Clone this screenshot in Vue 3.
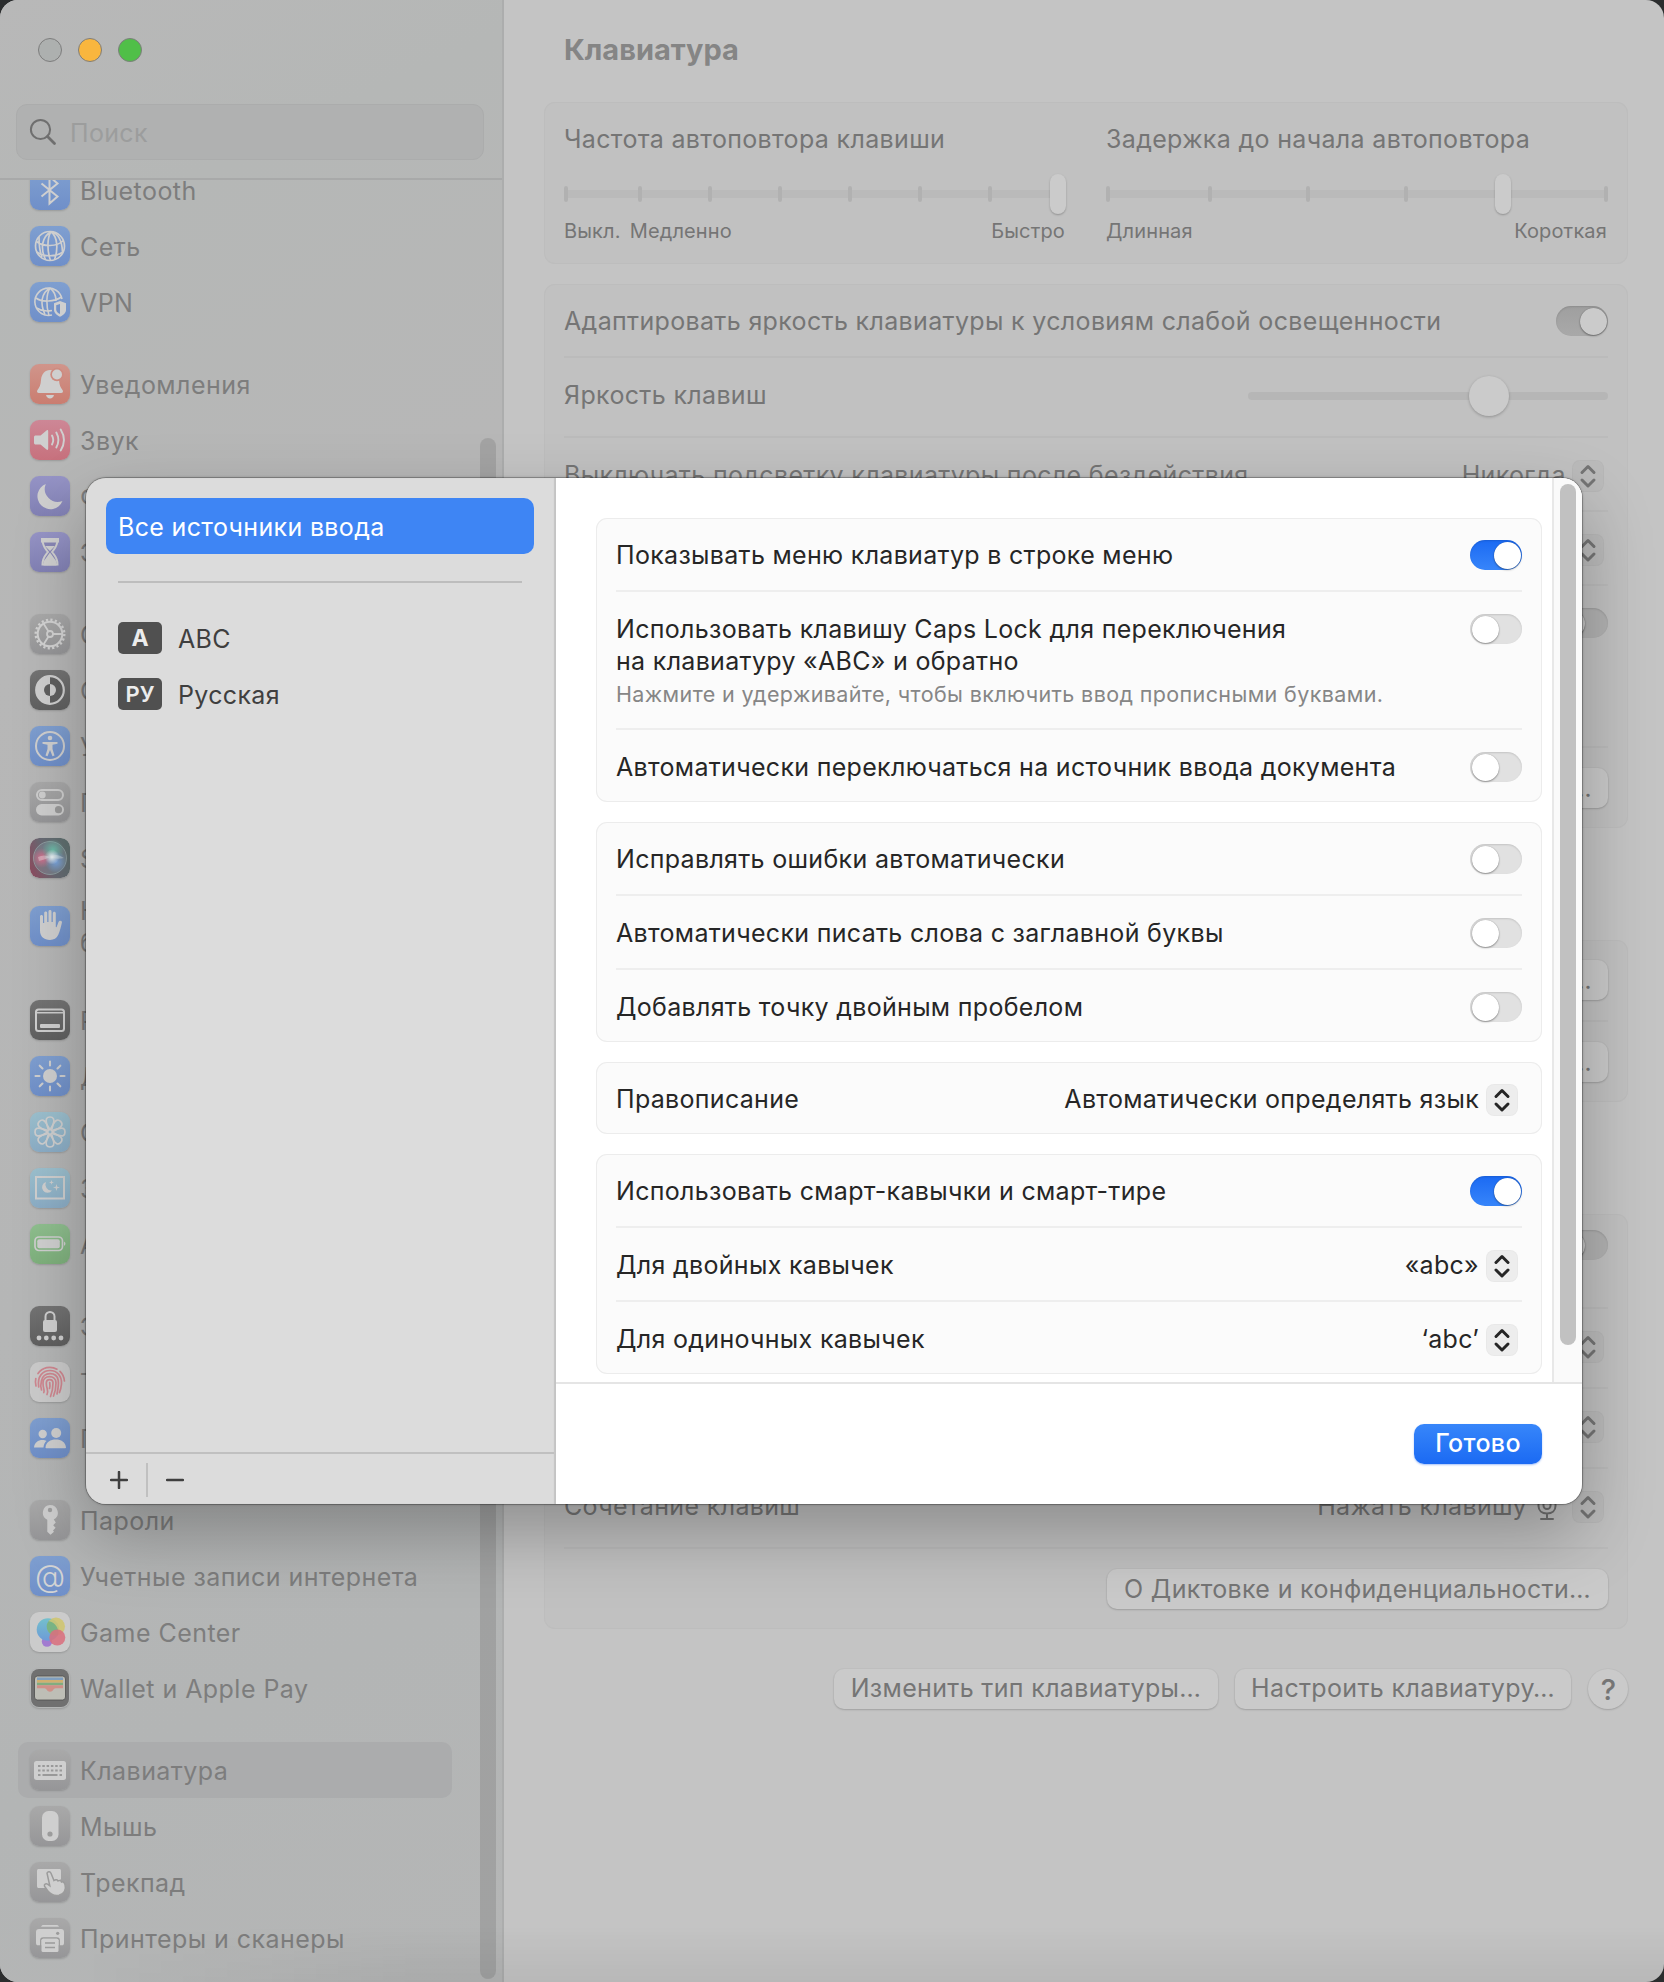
<script setup>
const F = '#cfcfcf'

const glyphs = {
  bluetooth: `<path d="M11.5 13.5L27.5 26.5L19.5 33.5V6.5L27.5 13.5L11.5 26.5" fill="none" stroke="${F}" stroke-width="2"/>`,
  globe: `<g fill="none" stroke="${F}" stroke-width="1.7"><circle cx="20" cy="20" r="14.5"/><path d="M21 5.5C12 11 10 22 15.5 33.5M21 5.5C17 12 17 25 20.500 34.500M21 5.500C28 11 28 24 24.500 33.500M22 5.500C28 8 32 14 32.500 26M6.500 15.500C13 21 27 21 33.500 14.500M6.500 26C14 31 26 31 33 26M9 11C9 18 9 24 12 31"/></g>`,
  vpn: `<g fill="none" stroke="${F}" stroke-width="1.6"><path d="M32 17A13.700 13.700 0 1 0 22 33"/><path d="M20 6C11 11 10 22 15 32.500M20 6C16 12 16 24 19 33.500M20 6C24 9 26 14 26 19M6 16C12 20.500 24 20 31.500 15M6.500 26C12 29.500 17 29.500 22 28.500"/></g><path d="M30 19l6 2.200v6.500c0 3.500-3 5.500-6 7c-3-1.500-6-3.500-6-7v-6.500z" fill="${F}"/><path d="M30 22v10c-2-1-3.800-2.200-3.800-4.500v-4.200z" fill="#7392c8"/>`,
  bell: `<path d="M20 6c-5 0-8.500 4-9 10c-.3 5-1.500 7.500-3.500 10c-1 1.500-.5 3 1.500 3h22c2 0 2.500-1.500 1.500-3c-2-2.500-3.200-5-3.500-10c-.5-6-4-10-9-10z" fill="${F}"/><path d="M16 31h8c-.5 2.200-2 3.500-4 3.500s-3.500-1.300-4-3.500z" fill="${F}"/><circle cx="27" cy="10.500" r="6.700" fill="#cd8b80"/><circle cx="27" cy="10.500" r="5" fill="${F}"/>`,
  sound: `<path d="M4 17.500c0-1.500.5-2 2-2h4.500l6-5c1-.8 1.700-.5 1.700.7v17.600c0 1.200-.7 1.500-1.700.7l-6-5H6c-1.500 0-2-.5-2-2z" fill="${F}"/><path d="M22 15.500q2.500 4.500 0 9M26.300 12.500q4.200 7.500 0 15M30.700 9.500q6.500 10.500 0 21" fill="none" stroke="${F}" stroke-width="1.900" stroke-linecap="round"/>`,
  moon: `<path d="M15.800 8A13 13 0 0 0 32.500 25A13 13 0 1 1 15.800 8z" fill="${F}"/>`,
  hourglass: `<path d="M12.500 7.500h15c0 7-3 9-5.500 12.500c2.500 3.500 5.500 5.500 5.500 12.500h-15c0-7 3-9 5.500-12.500c-2.500-3.500-5.500-5.500-5.500-12.500z" fill="#8886b5" stroke="${F}" stroke-width="2"/><path d="M11 6h18v4.500H11zM15 14h10l-5 5zM20 20.500l6.500 9v4h-13v-4z" fill="${F}"/>`,
  gear: `<g fill="none" stroke="#d2d2d2"><circle cx="20" cy="20" r="14.300" stroke-width="2.400" stroke-dasharray="2.200 2.290"/><circle cx="20" cy="20" r="12.300" stroke-width="2"/><circle cx="20" cy="20" r="3" stroke-width="1.800"/><path d="M23 20h9.500M18.500 17.400L13.500 9.500M18.500 22.600L13.500 30.500" stroke-width="1.800"/></g>`,
  contrast: `<circle cx="20" cy="20" r="13.800" fill="#5f5f5f" stroke="${F}" stroke-width="2.200"/><path d="M20 6a14 14 0 0 0 0 28z" fill="${F}"/><circle cx="20" cy="20" r="6" fill="${F}"/><path d="M20 14a6 6 0 0 0 0 12z" fill="#5f5f5f"/>`,
  access: `<circle cx="20" cy="20" r="14" fill="none" stroke="${F}" stroke-width="2"/><circle cx="20" cy="12" r="2.300" fill="${F}"/><path d="M12.500 16h15v1.800l-5 1V23l2 6.500-2 .7L20 24l-2.500 6.200-2-.7 2-6.500v-4.200l-5-1z" fill="${F}"/>`,
  switches: `<rect x="7" y="8" width="26" height="10" rx="5" fill="none" stroke="#cecece" stroke-width="2"/><circle cx="12.300" cy="13" r="3.400" fill="#cecece"/><rect x="6" y="22" width="28" height="11.500" rx="5.700" fill="#cecece"/><circle cx="28.500" cy="27.700" r="3.600" fill="#999"/>`,
  siri: `<defs><linearGradient id="sb" x1="0" y1=".8" x2="1" y2=".4"><stop offset="0" stop-color="#8b4d60"/><stop offset=".5" stop-color="#686a74"/><stop offset="1" stop-color="#5f6f6f"/></linearGradient><radialGradient id="sp"><stop offset="0" stop-color="#d8708e"/><stop offset="1" stop-color="#d8708e" stop-opacity="0"/></radialGradient><radialGradient id="st"><stop offset="0" stop-color="#6cbca8"/><stop offset="1" stop-color="#6cbca8" stop-opacity="0"/></radialGradient><radialGradient id="su"><stop offset="0" stop-color="#7aa4dc"/><stop offset="1" stop-color="#7aa4dc" stop-opacity="0"/></radialGradient><radialGradient id="sw"><stop offset="0" stop-color="#eef4f6"/><stop offset="1" stop-color="#eef4f6" stop-opacity="0"/></radialGradient></defs><rect width="40" height="40" rx="9" fill="url(#sb)"/><circle cx="20" cy="20" r="16.500" fill="#8694a0" stroke="#93a5a6" stroke-width=".8" fill-opacity=".45"/><circle cx="12" cy="20" r="10" fill="url(#sp)"/><circle cx="23" cy="12" r="11" fill="url(#st)"/><circle cx="26" cy="24" r="11" fill="url(#su)"/><circle cx="22" cy="19" r="7.500" fill="url(#sw)"/><path d="M9 23Q17 21 22 18T34 20Q26 22 20 19T8 19z" fill="#e4eaec" fill-opacity=".4"/>`,
  hand: `<path d="M10 10.500c0-2 3-2 3 0V17h1.200V7c0-2 3-2 3 0v9h1.300V5.500c0-2 3-2 3 0V16h1.300V7.200c0-2 3-2 3 0V21l.7.200l2-5.200c1-2.200 4-1.500 3.400.8c-1 4-1.800 8-3.600 12c-1.500 3.400-4.500 5.200-8.300 5.200c-6 0-10-3.500-10-9.500z" fill="${F}"/>`,
  dock: `<rect x="6" y="9.500" width="28" height="21.500" rx="2.500" fill="none" stroke="${F}" stroke-width="2"/><path d="M7 12.800h26" stroke="${F}" stroke-width="1.500"/><rect x="10" y="24" width="20" height="4" rx="1" fill="${F}"/>`,
  sun: `<circle cx="20" cy="20" r="7" fill="${F}"/><path d="M20 5.500v4M20 30.500v4M5.500 20h4M30.500 20h4M9.700 9.700l2.800 2.800M27.500 27.500l2.800 2.800M30.300 9.700l-2.800 2.800M12.500 27.500l-2.800 2.800" stroke="${F}" stroke-width="2.100" stroke-linecap="round"/>`,
  flower: `<g fill="none" stroke="${F}" stroke-width="1.700">${[0, 45, 90, 135, 180, 225, 270, 315].map(a => `<path transform="rotate(${a} 20 20)" d="M18.300 17.500L16.600 11.500C15.200 7 16.800 5 20 5S24.800 7 23.400 11.500L21.700 17.500"/>`).join('')}<circle cx="20" cy="20" r="2.300"/></g>`,
  saver: `<rect x="6" y="9" width="28" height="21.500" fill="none" stroke="${F}" stroke-width="2"/><path d="M16 14a5.500 5.500 0 1 0 6 8.500a6 6 0 0 1-6-8.500zM26.500 16l.8 2.700l2.700.8l-2.700.8l-.8 2.700l-.8-2.700l-2.700-.8l2.700-.8zM21.500 12l.6 1.800l1.800.6l-1.800.6l-.6 1.800l-.6-1.800l-1.800-.6l1.800-.6z" fill="${F}"/>`,
  battery: `<rect x="5" y="13" width="27.500" height="13.500" rx="4" fill="none" stroke="${F}" stroke-width="1.700"/><rect x="7.300" y="15.300" width="22.500" height="9" rx="2" fill="${F}"/><path d="M34 17.500q3 2.200 0 4.500z" fill="${F}"/>`,
  lock: `<rect x="13" y="14" width="14" height="12" rx="2" fill="${F}"/><path d="M15.500 15v-4.500a4.500 4.500 0 0 1 9 0V15" fill="none" stroke="${F}" stroke-width="2"/><g fill="${F}"><circle cx="9" cy="32" r="2.400"/><circle cx="16.300" cy="32" r="2.400"/><circle cx="23.700" cy="32" r="2.400"/><circle cx="31" cy="32" r="2.400"/></g>`,
  finger: `<g fill="none" stroke="#cf8790" stroke-width="1.700" stroke-linecap="round"><path d="M8 11.500A14.500 14.500 0 0 1 27 7.200M30 9.300A14.500 14.500 0 0 1 34.400 19M5.800 16.500A15 15 0 0 0 6 24M8.700 25C7 14 13 8.500 20 8.500S32 14 31.500 22Q31 27 29.500 30.500M11.500 28C10.500 25 9.500 11.600 20 11.600S29 22 27 32M13.800 30.500C15 28 13 27 13 21C13 12.500 26 12.500 26 21Q26 28 23.500 34M17 32.500C19 28 16.300 27 16.300 21C16.300 16.500 23 16.500 23 21Q23 28 20.500 34.500M19.700 20.500Q20.300 24 19.500 26.500"/></g>`,
  users: `<g fill="${F}"><circle cx="12.700" cy="16" r="4.200"/><circle cx="26.200" cy="15" r="5"/><path d="M4 29.500c.5-5 4-7.500 8.500-7.500c1.500 0 3 .3 4 1c-2 1.500-2.800 4-3 6.500zM15.500 29.500c.5-5.500 5-8 10.300-8s9.700 2.500 10.200 8c0 .5-.3.700-.8.700h-19c-.5 0-.7-.2-.7-.7z"/></g>`,
  key: `<path d="M20 5a7.800 7.800 0 0 1 3.800 14.600l2 3l-2.600 2.600l2.400 2.600l-2.600 2.800l1 1.200l-3.500 3l-3.200-3V19.800A7.800 7.800 0 0 1 20 5z" fill="#cecece"/><circle cx="20" cy="10" r="2.200" fill="#9e9e9e"/>`,
  at: `<text x="20" y="30.500" text-anchor="middle" font-family="Inter, sans-serif" font-size="31" font-weight="300" letter-spacing="0" fill="#d4d4d4">@</text>`,
  game: `<defs><linearGradient id="ga" x1="0" y1="0" x2="0" y2="1"><stop offset="0" stop-color="#74c0cc"/><stop offset="1" stop-color="#6d9bd8"/></linearGradient></defs><circle cx="17" cy="29.500" r="5.200" fill="#a27bd0"/><circle cx="18" cy="17.500" r="11.300" fill="url(#ga)"/><circle cx="26" cy="14.500" r="9" fill="#d0c56c" fill-opacity=".85"/><path d="M18.500 9.300a9 9 0 0 0 9.500 14a11.300 11.300 0 0 0-9.500-14z" fill="#79b384"/><circle cx="27.300" cy="25.500" r="8" fill="#d9707e" fill-opacity=".88"/>`,
  wallet: `<rect x="1" y="1" width="38" height="38" rx="8" fill="#707070"/><rect x="4.500" y="8" width="31" height="24" rx="3" fill="#bebeb6" stroke="#4e4e4e" stroke-width=".8"/><path d="M7 9.500h26v2.500H7z" fill="#7f9fc0"/><path d="M7 12h26v2.700H7z" fill="#d0b070"/><path d="M7 14.700h26v2.500H7z" fill="#80ad80"/><path d="M7 17.200h26v3h-7.500c-2 0-2.500 3.500-5.500 3.500s-3.500-3.500-5.500-3.500H7z" fill="#cf9088"/>`,
  keyboard: `<rect x="4" y="11" width="32" height="19" rx="2.500" fill="${F}"/><path d="M8 16h24M8 20.500h24" stroke="#999" stroke-width="2.200" stroke-dasharray="2.500 1.800"/><path d="M8 25h2.500M12.500 25h15M29.500 25h2.500" stroke="#999" stroke-width="2.200"/>`,
  mouse: `<rect x="12" y="5" width="16.500" height="30" rx="6.500" fill="${F}"/><circle cx="20" cy="28" r="2.600" fill="#9c9c9c"/>`,
  trackpad: `<path d="M9 7h20c1.500 0 2 .5 2 2v8l-10 9H9c-1.500 0-2-.5-2-2V9c0-1.500.5-2 2-2z" fill="${F}"/><path d="M17 11c1-1.800 3.200-1.500 4 .2l3 7.300c2-1.500 3.500-.5 4 .5c1.500-1 3-.3 3.500 1c1.800-.5 3 .5 3.500 2.500c1.500 5-1 9.500-6 10.800c-5 1-8.500-1-11.500-4.800l-3-4.300c-.7-2 1.300-3 3-2l2.300 1.600z" fill="${F}" stroke="#9b9b9b" stroke-width="1.500"/>`,
  printer: `<path d="M11 8.700c.5-1.300 1.500-1.700 3-1.700h12c1.500 0 2.500.4 3 1.700z" fill="${F}"/><path d="M9 11h22c2 0 3 1 3 3v11c0 1.500-.7 2.300-2.200 2.300H8.200C6.700 27.300 6 26.500 6 25V14c0-2 1-3 3-3z" fill="${F}"/><circle cx="27.700" cy="15.300" r="1.600" fill="#9b9b9b"/><path d="M10.800 29v-6.500c0-1.700.8-2.500 2.500-2.500h13.400c1.700 0 2.500.8 2.500 2.500V29" fill="none" stroke="#9b9b9b" stroke-width="1.500"/><rect x="11.500" y="20.800" width="17" height="13.200" rx="1.500" fill="${F}"/><path d="M15 25h10M15 29.500h10" stroke="#9b9b9b" stroke-width="1.500"/>`,
}

const groups = [
  [
    { icon: 'bluetooth', tone: 'blue', label: 'Bluetooth' },
    { icon: 'globe', tone: 'blue', label: 'Сеть' },
    { icon: 'vpn', tone: 'blue', label: 'VPN' },
  ],
  [
    { icon: 'bell', tone: 'red', label: 'Уведомления' },
    { icon: 'sound', tone: 'pink', label: 'Звук' },
    { icon: 'moon', tone: 'violet', label: 'Фокусирование' },
    { icon: 'hourglass', tone: 'violet', label: 'Экранное время' },
  ],
  [
    { icon: 'gear', tone: 'gray', label: 'Основные' },
    { icon: 'contrast', tone: 'dark', label: 'Оформление' },
    { icon: 'access', tone: 'blue', label: 'Универсальный доступ' },
    { icon: 'switches', tone: 'gray', label: 'Пункт управления' },
    { icon: 'siri', tone: 'none', label: 'Siri и Spotlight' },
    { icon: 'hand', tone: 'blue', label: 'Конфиденциальность и безопасность', tall: true },
  ],
  [
    { icon: 'dock', tone: 'dark', label: 'Рабочий стол и Dock' },
    { icon: 'sun', tone: 'blue', label: 'Дисплеи' },
    { icon: 'flower', tone: 'cyan', label: 'Обои' },
    { icon: 'saver', tone: 'cyan', label: 'Заставка' },
    { icon: 'battery', tone: 'green', label: 'Аккумулятор' },
  ],
  [
    { icon: 'lock', tone: 'dark', label: 'Экран блокировки' },
    { icon: 'finger', tone: 'light', label: 'Touch ID и пароль' },
    { icon: 'users', tone: 'blue', label: 'Пользователи и группы' },
  ],
  [
    { icon: 'key', tone: 'gray', label: 'Пароли' },
    { icon: 'at', tone: 'blue', label: 'Учетные записи интернета' },
    { icon: 'game', tone: 'light', label: 'Game Center' },
    { icon: 'wallet', tone: 'none', label: 'Wallet и Apple Pay' },
  ],
  [
    { icon: 'keyboard', tone: 'gray', label: 'Клавиатура', active: true },
    { icon: 'mouse', tone: 'gray', label: 'Мышь' },
    { icon: 'trackpad', tone: 'gray', label: 'Трекпад' },
    { icon: 'printer', tone: 'gray', label: 'Принтеры и сканеры' },
  ],
]

const sliders = [
  { title: 'Частота автоповтора клавиши', ticks: [2, 76, 146, 216, 286, 356, 426], knob: 494, left: ['Выкл.', 'Медленно'], right: 'Быстро' },
  { title: 'Задержка до начала автоповтора', ticks: [2, 104, 202, 300, 500], knob: 397, left: ['Длинная'], right: 'Короткая' },
]

const sheetGroups = [
  [
    { label: ['Показывать меню клавиатур в строке меню'], toggle: true },
    {
      label: ['Использовать клавишу Caps Lock для переключения', 'на клавиатуру «ABC» и обратно'],
      note: 'Нажмите и удерживайте, чтобы включить ввод прописными буквами.',
      toggle: false,
    },
    { label: ['Автоматически переключаться на источник ввода документа'], toggle: false },
  ],
  [
    { label: ['Исправлять ошибки автоматически'], toggle: false },
    { label: ['Автоматически писать слова с заглавной буквы'], toggle: false },
    { label: ['Добавлять точку двойным пробелом'], toggle: false },
  ],
  [{ label: ['Правописание'], value: 'Автоматически определять язык' }],
  [
    { label: ['Использовать смарт-кавычки и смарт-тире'], toggle: true },
    { label: ['Для двойных кавычек'], value: '«abc»' },
    { label: ['Для одиночных кавычек'], value: '‘abc’' },
  ],
]
</script>

<template>
  <div class="desktop">
    <div class="window">
      <aside class="sidebar">
        <div class="lights"><i class="l-close"></i><i class="l-min"></i><i class="l-max"></i></div>
        <div class="search">
          <svg width="28" height="28" viewBox="0 0 28 28"><circle cx="11.500" cy="11.500" r="9.600" fill="none" stroke="#6f6f6f" stroke-width="2" /><path d="M18.500 18.500L25.500 25.500" stroke="#6f6f6f" stroke-width="2.800" stroke-linecap="round" /></svg>
          <span>Поиск</span>
        </div>
        <div class="list-view">
          <nav class="list">
            <div v-for="(g, gi) in groups" :key="gi" class="nav-group">
              <div v-for="item in g" :key="item.label" class="nav-item" :class="{ active: item.active, tall: item.tall }">
                <svg class="icon" :class="item.tone" viewBox="0 0 40 40" v-html="glyphs[item.icon]"></svg>
                <span>{{ item.label }}</span>
              </div>
            </div>
          </nav>
          <div class="side-scroll"></div>
        </div>
      </aside>

      <main class="pane">
        <h1>Клавиатура</h1>
        <section class="card rates">
          <div v-for="s in sliders" :key="s.title" class="rate">
            <div class="rate-title">{{ s.title }}</div>
            <div class="ticked">
              <div class="track"></div>
              <i v-for="t in s.ticks" :key="t" class="tick" :style="{ left: t + 'px' }"></i>
              <i class="bar-knob" :style="{ left: s.knob + 'px' }"></i>
            </div>
            <div class="rate-labels">
              <span v-for="l in s.left" :key="l">{{ l }}</span>
              <span class="end">{{ s.right }}</span>
            </div>
          </div>
        </section>

        <section class="card">
          <div class="row"><span>Адаптировать яркость клавиатуры к условиям слабой освещенности</span><i class="toggle on dim"></i></div>
          <div class="row r78 bright"><span>Яркость клавиш</span><div class="range"><i></i></div></div>
          <div class="row"><span>Выключать подсветку клавиатуры после бездействия</span><span class="value">Никогда</span><b class="stepper"><svg viewBox="0 0 32 32"><path d="M10 12.500L16 6.500L22 12.500M10 20L16 26L22 20" /></svg></b></div>
          <div class="row"><span>Клавиша Fn</span><span class="value">Ничего не делать</span><b class="stepper"><svg viewBox="0 0 32 32"><path d="M10 12.500L16 6.500L22 12.500M10 20L16 26L22 20" /></svg></b></div>
          <div class="row r160"><span>Навигация с клавиатуры</span><i class="toggle dim"></i></div>
          <div class="row r80"><button class="btn">Сочетания клавиш…</button></div>
        </section>

        <section class="card gap">
          <div class="row r80"><span>Источники ввода</span><button class="btn">Изменить…</button></div>
          <div class="row r80"><button class="btn">Замена текста…</button></div>
        </section>

        <section class="card gap">
          <div class="row r93"><span>Диктовка</span><i class="toggle dim"></i></div>
          <div class="row r78"><span>Языки</span><b class="stepper"><svg viewBox="0 0 32 32"><path d="M10 12.500L16 6.500L22 12.500M10 20L16 26L22 20" /></svg></b></div>
          <div class="row r78"><span>Источник микрофона</span><b class="stepper"><svg viewBox="0 0 32 32"><path d="M10 12.500L16 6.500L22 12.500M10 20L16 26L22 20" /></svg></b></div>
          <div class="row r78">
            <span>Сочетание клавиш</span><span class="value">Нажать клавишу</span>
            <svg class="mic" viewBox="0 0 20 28"><g fill="none" stroke="#6f6f6f" stroke-width="2" stroke-linecap="round"><rect x="6.500" y="2" width="7" height="14" rx="3.500" /><path d="M1.500 11.500v1.500c0 4.500 3.500 7.500 8.500 7.500s8.500-3 8.500-7.500v-1.500M10 21v5M4 26h12" /></g></svg>
            <b class="stepper"><svg viewBox="0 0 32 32"><path d="M10 12.500L16 6.500L22 12.500M10 20L16 26L22 20" /></svg></b>
          </div>
          <div class="row r80"><button class="btn w501">О Диктовке и конфиденциальности…</button></div>
        </section>

        <div class="footer">
          <button class="btn w384">Изменить тип клавиатуры…</button>
          <button class="btn w336">Настроить клавиатуру…</button>
          <button class="btn help">?</button>
        </div>
      </main>

      <div class="sheet">
        <div class="sources">
          <div class="all">Все источники ввода</div>
          <div class="rule"></div>
          <div class="source"><b>A</b><span>ABC</span></div>
          <div class="source"><b>РУ</b><span>Русская</span></div>
          <div class="tools">
            <svg width="18" height="18" viewBox="0 0 18 18"><path d="M1 9h16M9 1v16" /></svg>
            <i></i>
            <svg width="18" height="18" viewBox="0 0 18 18"><path d="M1 9h16" /></svg>
          </div>
        </div>
        <div class="detail">
          <div class="scroll">
            <div class="forms">
              <section v-for="(g, gi) in sheetGroups" :key="gi" class="box">
                <div v-for="r in g" :key="r.label[0]" class="line">
                  <div class="text">
                    <div v-for="l in r.label" :key="l">{{ l }}</div>
                    <small v-if="r.note">{{ r.note }}</small>
                  </div>
                  <i v-if="r.value === undefined" class="toggle" :class="{ on: r.toggle }"></i>
                  <template v-else>
                    <span class="value">{{ r.value }}</span>
                    <b class="stepper"><svg viewBox="0 0 32 32"><path d="M10 12.500L16 6.500L22 12.500M10 20L16 26L22 20" /></svg></b>
                  </template>
                </div>
              </section>
            </div>
            <div class="bar"><i></i></div>
          </div>
          <div class="actions"><button class="done">Готово</button></div>
        </div>
      </div>
    </div>
  </div>
</template>

<style>
body { margin: 0; }
</style>

<style scoped>
.desktop {
  width: 1664px;
  height: 1982px;
  background: #2b2d2e;
  font-family: Inter, "Noto Sans", sans-serif;
  font-size: 25px;
  line-height: 32px;
  letter-spacing: 0.34px;
  overflow: hidden;
}
.desktop *, .desktop { box-sizing: border-box; }
button { font: inherit; letter-spacing: inherit; border: 0; padding: 0; }
.window {
  position: relative;
  display: flex;
  height: 1982px;
  border-radius: 18px;
  overflow: hidden;
  background: #c4c4c4;
}
.window::after {
  content: "";
  position: absolute;
  left: 0;
  right: 0;
  bottom: 0;
  height: 56px;
  background: linear-gradient(to right, rgba(0, 0, 0, 0) 5%, rgba(0, 0, 0, 0.06) 25%, rgba(0, 0, 0, 0.06));
  -webkit-mask-image: linear-gradient(transparent, #000);
  mask-image: linear-gradient(transparent, #000);
}

/* sidebar */
.sidebar {
  width: 504px;
  flex: none;
  display: flex;
  flex-direction: column;
  background: linear-gradient(155deg, #b8b8b8 0%, #b5b7b6 12%, #b7b7b7 30%, #b5b6b6 60%, #b3b5b5 82%, #b5b6b6 100%);
  box-shadow: inset -2px 0 0 #acadad;
  color: #7d7d7d;
}
.lights { display: flex; gap: 16px; padding: 38px 0 0 38px; height: 104px; }
.lights i { width: 24px; height: 24px; border-radius: 50%; border: 1px solid; }
.l-close { background: #adb0af; border-color: #8b8d8c; }
.l-min { background: #f9b63e; border-color: #d9962b; }
.l-max { background: #50bf48; border-color: #3d9f36; }
.search {
  display: flex;
  align-items: center;
  gap: 13px;
  margin: 0 20px 18px 16px;
  height: 56px;
  padding: 0 0 0 12px;
  border-radius: 11px;
  border: 1px solid #abacac;
  background: #b0b1b1;
  color: #9c9d9d;
}
.search span { padding-top: 2px; }
.list-view { position: relative; flex: 1; overflow: hidden; margin-right: 2px; border-top: 2px solid #a8a9a9; }
.list { display: flex; flex-direction: column; gap: 26px; margin-top: -18px; padding-left: 18px; letter-spacing: 0.45px; }
.nav-item { display: flex; align-items: center; gap: 10px; width: 434px; height: 56px; padding-left: 12px; border-radius: 10px; }
.nav-item.tall { height: 80px; }
.nav-item span { padding-top: 2px; }
.nav-item.active { background: #abacad; }
.icon { width: 40px; height: 40px; flex: none; border-radius: 9px; box-shadow: 0 1px 2px rgba(0, 0, 0, 0.16); }
.blue { background: linear-gradient(#7f9fd0, #6f8fc9); }
.red { background: linear-gradient(#d0958b, #ca7d70); }
.pink { background: linear-gradient(#cd8796, #c7717d); }
.violet { background: linear-gradient(#9694c6, #8281b4); }
.gray { background: linear-gradient(#a9a9a9, #969698); }
.dark { background: linear-gradient(#747474, #606060); }
.cyan { background: linear-gradient(#9cc0ce, #8badc6); }
.green { background: linear-gradient(#8fbf8f, #7eb07c); }
.light { background: #cbcbcb; }
.side-scroll { position: absolute; left: 480px; top: 258px; width: 16px; height: 1541px; border-radius: 8px; background: rgba(0, 0, 0, 0.105); }

/* keyboard pane */
.pane { flex: 1; padding: 0 36px 0 40px; color: #757575; }
h1 { margin: 0; padding: 30px 0 0 20px; height: 102px; font-size: 29px; line-height: 40px; letter-spacing: 0; font-weight: 700; color: #858585; }
.card { border-radius: 11px; background: #c1c1c1; box-shadow: inset 0 0 0 1px #bdbdbd; margin-bottom: 20px; padding: 0 20px; }
.card.gap { margin-top: 112px; }
.rates { display: flex; gap: 40px; height: 162px; padding-top: 21px; }
.rate { flex: 1; }
.ticked { position: relative; height: 40px; margin-top: 19px; display: flex; align-items: center; }
.track { width: 100%; height: 8px; border-radius: 4px; background: #bababa; }
.tick { position: absolute; top: 12px; width: 4px; height: 16px; margin-left: -2px; border-radius: 2px; background: #b1b1b1; }
.bar-knob { position: absolute; top: 0; width: 16px; height: 40px; margin-left: -8px; border-radius: 8px; background: #cbcbcb; box-shadow: 0 1px 2px rgba(0, 0, 0, 0.25); }
.rate-labels { display: flex; gap: 9px; margin-top: 5px; font-size: 20px; line-height: 24px; letter-spacing: 0.15px; }
.rate-labels .end { margin-left: auto; padding-right: 1px; }
.row { display: flex; align-items: flex-start; height: 72px; padding-top: 21px; }
.row + .row { border-top: 2px solid #bbbbbb; height: 74px; }
.row.r80 { height: 80px; padding-top: 20px; }
.row + .row.r80 { height: 82px; }
.row + .row.r78 { height: 80px; }
.row + .row.r160 { height: 162px; }
.row.r93 { height: 93px; padding-top: 15px; }
.row > :last-child:not(:first-child) { margin-left: auto; }
.row > .value { margin-left: auto; }
.row > .value ~ .stepper:last-child { margin-left: 6px; }
.row > .mic + .stepper:last-child { margin-left: 15px; }
.row .btn { margin-left: auto; }
.row.bright .range { margin-top: 13px; position: relative; width: 360px; height: 8px; border-radius: 4px; background: #b6b6b6; }
.range i { position: absolute; left: 221px; top: -16px; width: 40px; height: 40px; border-radius: 50%; background: #cbcbcb; box-shadow: 0 1px 3px rgba(0, 0, 0, 0.25); }
.mic { width: 20px; height: 28px; margin: 3px 0 0 10px; }
.btn { height: 40px; line-height: 38px; border-radius: 10px; padding: 0 16px 1px; background: #cacaca; color: #757575; box-shadow: 0 1px 2px rgba(0, 0, 0, 0.17), 0 0 0 1px rgba(0, 0, 0, 0.02); white-space: nowrap; }
.w501 { width: 501px; }
.w384 { width: 384px; }
.w336 { width: 336px; }
.footer { display: flex; justify-content: flex-end; margin-top: 40px; }
.footer .btn { margin-left: 17px; line-height: 39px; }
.footer .help { width: 40px; padding: 0 0 0 1px; border-radius: 50%; font-size: 29px; font-weight: 500; }

.toggle { flex: none; width: 52px; height: 30px; margin-top: 1px; border-radius: 15px; background: #e1e1e1; box-shadow: inset 0 1px 2px rgba(0, 0, 0, 0.13); display: flex; padding: 1.5px; }
.toggle::before { content: ""; width: 27px; height: 27px; border-radius: 50%; background: #fff; box-shadow: 0 1px 2px rgba(0, 0, 0, 0.35), 0 0 1px rgba(0, 0, 0, 0.3); }
.toggle.on { justify-content: flex-end; background: linear-gradient(#1b6af3, #3785fa); }
.toggle.dim { background: #b2b2b2; }
.toggle.dim.on { background: linear-gradient(#9f9f9f, #a9a9a9); }
.toggle.dim::before { background: #cbcbcb; }
.stepper { flex: none; width: 32px; height: 32px; margin: 1px 4px 0 7px; border-radius: 8px; background: #ededed; box-shadow: inset 0 0 0 1px rgba(0, 0, 0, 0.02); }
.stepper svg { display: block; width: 32px; height: 32px; }
.stepper path { fill: none; stroke: #262626; stroke-width: 3; stroke-linecap: round; stroke-linejoin: round; }
.pane .stepper { background: #bbbbbb; }
.pane .stepper path { stroke: #757575; }

/* input sources sheet */
.sheet {
  position: absolute;
  left: 86px;
  top: 478px;
  width: 1496px;
  height: 1026px;
  display: flex;
  border-radius: 20px;
  box-shadow: 0 0 0 1px rgba(0, 0, 0, 0.2), 0 0 3px rgba(0, 0, 0, 0.35), 0 30px 70px rgba(0, 0, 0, 0.27);
}
.sources {
  width: 470px;
  display: flex;
  flex-direction: column;
  padding-top: 20px;
  border-radius: 20px 0 0 20px;
  background: #dcdcdc;
  box-shadow: inset -2px 0 1px #c4c4c4;
  color: #3f3f3f;
}
.all { margin: 0 22px 0 20px; height: 56px; padding: 13px 0 0 12px; border-radius: 10px; background: #3e85f4; color: #fff; }
.rule { margin: 27px 34px 27px 32px; height: 2px; background: #bdbdbd; }
.source { display: flex; align-items: center; height: 56px; padding-left: 32px; }
.source b { width: 44px; height: 32px; margin-right: 16px; border-radius: 5px; background: #505050; color: #ececec; font-size: 23px; font-weight: 700; text-align: center; letter-spacing: 0; line-height: 33px; }
.source + .source b { font-weight: 600; font-size: 22px; }
.source span { padding-top: 1px; }
.tools { margin: auto 2px 0 0; height: 52px; border-top: 2px solid #c0c0c0; display: flex; padding: 17px 0 0 24px; }
.tools i { width: 2px; height: 34px; margin: -8px 18px 0; background: #c0c0c0; }
.tools path { fill: none; stroke: #3f3f3f; stroke-width: 2.500; stroke-linecap: round; }
.detail { flex: 1; display: flex; flex-direction: column; background: #fff; border-radius: 0 20px 20px 0; overflow: hidden; color: #262626; }
.scroll { height: 906px; display: flex; border-bottom: 2px solid #e5e5e5; }
.forms { flex: 1; padding: 40px 10px 0 40px; display: flex; flex-direction: column; gap: 20px; letter-spacing: 0.31px; }
.box { border-radius: 11px; background: #fbfbfb; box-shadow: inset 0 0 0 1px #ececec; padding: 0 20px; }
.line { display: flex; align-items: flex-start; min-height: 72px; padding: 21px 0 19px; }
.line + .line { border-top: 2px solid #eeeeee; min-height: 74px; }
.text { flex: 1; white-space: nowrap; }
.text small { display: block; margin: 3px 0 1px; font-size: 21.5px; line-height: 28px; letter-spacing: 0.38px; color: #868686; }
.line .stepper { margin-bottom: -1px; }
.bar { width: 30px; border-left: 2px solid #e8e8e8; background: #fafafa; padding: 6px 0 0 6px; }
.bar i { display: block; width: 16px; height: 861px; border-radius: 8px; background: #c1c1c1; }
.actions { flex: 1; display: flex; justify-content: flex-end; padding: 40px 40px 0 0; }
.done { width: 128px; height: 40px; line-height: 38px; padding-bottom: 2px; border-radius: 10px; background: linear-gradient(#3786fa, #1b6af3); color: #fff; font-weight: 500; box-shadow: 0 1px 2px rgba(30, 100, 240, 0.4); }
</style>
